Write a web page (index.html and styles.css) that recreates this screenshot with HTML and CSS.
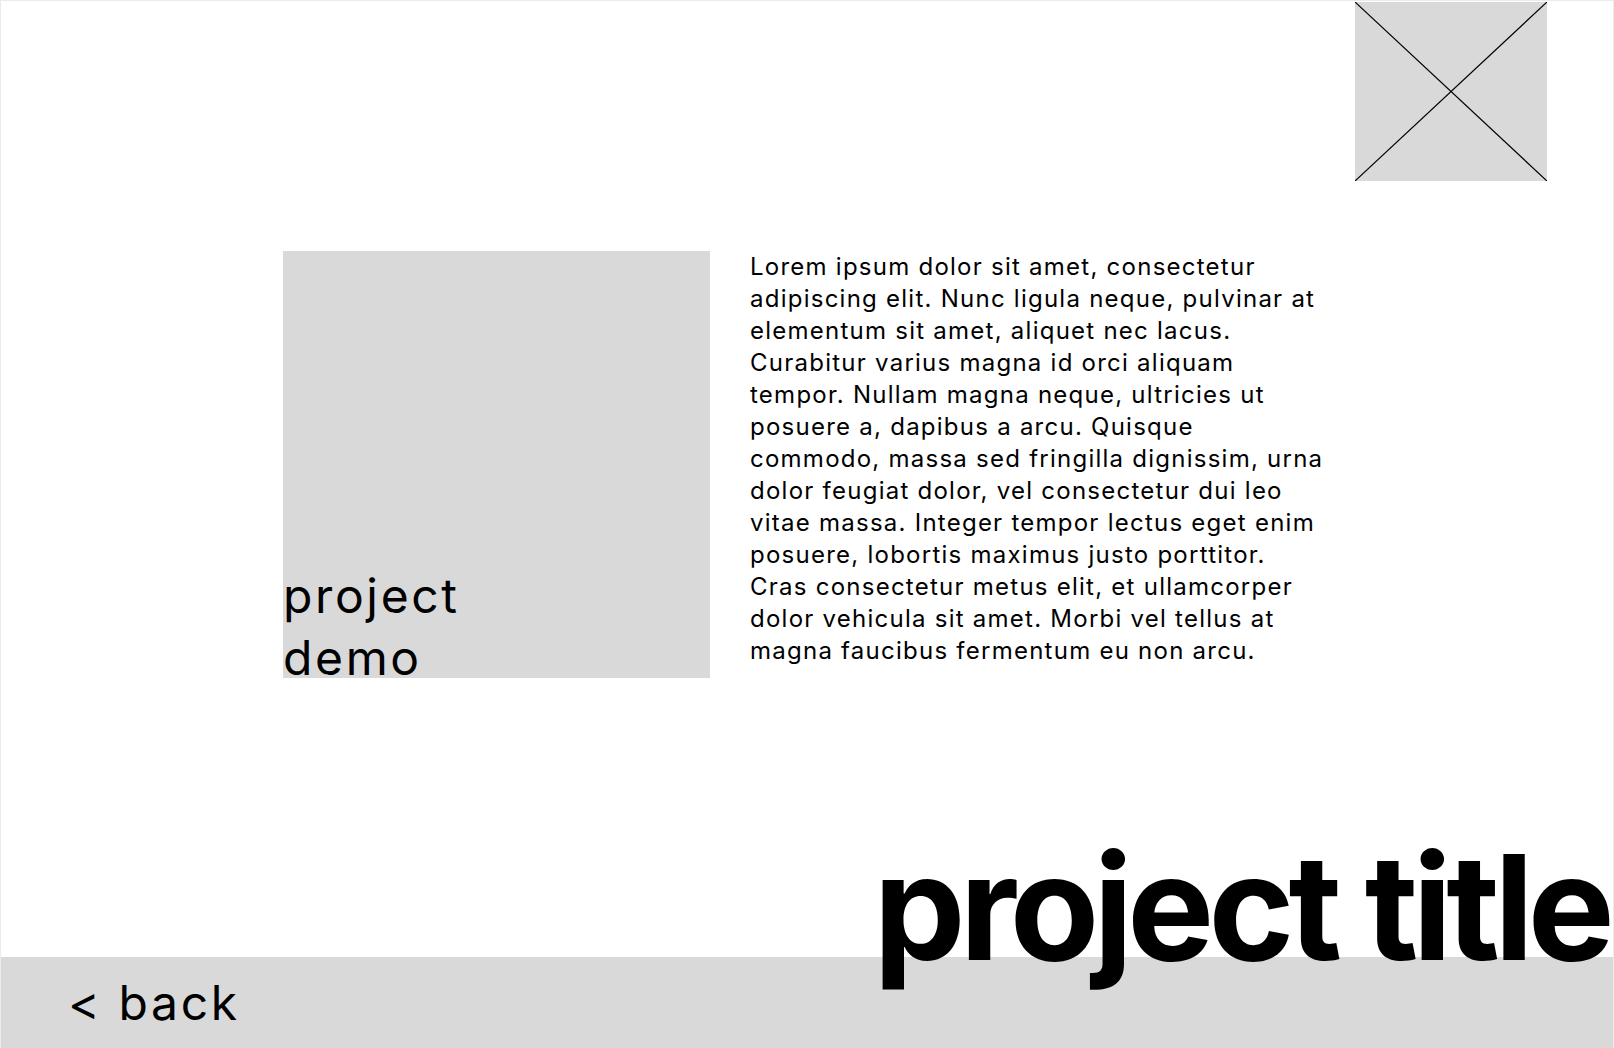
FILE: index.html
```html
<!DOCTYPE html>
<html lang="en">
<head>
<meta charset="utf-8">
<title>project title</title>
<link rel="stylesheet" href="styles.css">
</head>
<body>
<div class="frame">
  <header class="top">
    <div class="placeholder">
      <svg class="cross" viewBox="0 0 192 179" preserveAspectRatio="none" aria-hidden="true">
        <line x1="0" y1="0" x2="192" y2="179" />
        <line x1="192" y1="0" x2="0" y2="179" />
      </svg>
    </div>
  </header>
  <main class="main">
    <div class="row">
      <div class="demo">
        <span class="demo-label">project<br>demo</span>
      </div>
      <p class="desc">Lorem ipsum dolor sit amet, consectetur adipiscing elit. Nunc ligula neque, pulvinar at elementum sit amet, aliquet nec lacus. Curabitur varius magna id orci aliquam tempor. Nullam magna neque, ultricies ut posuere a, dapibus a arcu. Quisque commodo, massa sed fringilla dignissim, urna dolor feugiat dolor, vel consectetur dui leo vitae massa. Integer tempor lectus eget enim posuere, lobortis maximus justo porttitor. Cras consectetur metus elit, et ullamcorper dolor vehicula sit amet. Morbi vel tellus at magna faucibus fermentum eu non arcu.</p>
    </div>
  </main>
  <h1 class="title">project title</h1>
  <footer class="bar">
    <a class="back" href="#">&lt; back</a>
  </footer>
</div>
</body>
</html>
```
FILE: styles.css
```css
* {
  box-sizing: border-box;
}

html, body {
  margin: 0;
  padding: 0;
  background: #ffffff;
}

body {
  font-family: "Inter", "Noto Sans", sans-serif;
  color: #000000;
}

.frame {
  width: 1614px;
  height: 1048px;
  border: 1px solid #ebebeb;
  border-bottom: none;
  display: flex;
  flex-direction: column;
  overflow: hidden;
}

.top {
  display: flex;
  justify-content: flex-end;
  padding-top: 1px;
  padding-right: 66px;
}

.placeholder {
  width: 192px;
  height: 179px;
  background: #d9d9d9;
}

.cross {
  display: block;
  width: 100%;
  height: 100%;
}

.cross line {
  stroke: #000000;
  stroke-width: 1.2;
}

.main {
  flex: 1;
  padding-top: 70px;
}

.row {
  display: flex;
  justify-content: center;
  gap: 40px;
}

.demo {
  width: 427px;
  height: 427px;
  flex: none;
  background: #d9d9d9;
  display: flex;
  flex-direction: column;
  justify-content: flex-end;
  overflow: hidden;
}

.demo-label {
  font-size: 48px;
  line-height: 62px;
  letter-spacing: 0.055em;
  margin-bottom: -11px;
}

.desc {
  width: 581px;
  margin: 0;
  font-size: 24px;
  line-height: 32px;
  letter-spacing: 0.052em;
}

.title {
  position: relative;
  z-index: 1;
  margin: 0 0 -23px 0;
  text-align: right;
  font-size: 146px;
  line-height: 146px;
  font-weight: 700;
  letter-spacing: -0.04em;
  padding-right: 4px;
}

.bar {
  height: 91px;
  flex: none;
  background: #d9d9d9;
  padding: 16px 0 0 67px;
}

.back {
  color: #000000;
  text-decoration: none;
  font-size: 48px;
  line-height: normal;
  letter-spacing: 0.055em;
}
```
